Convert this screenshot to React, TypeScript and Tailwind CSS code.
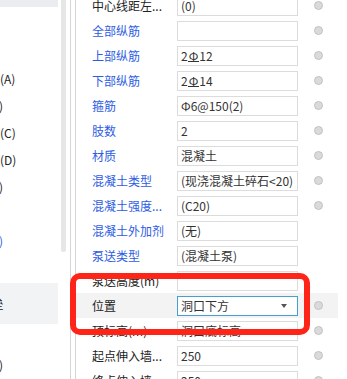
type Row = {
  label: string
  blue?: boolean
  value?: React.ReactNode
  radio?: boolean
  select?: boolean
}

// HRB400 rebar mark: Φ with a base stroke
const Hrb = () => <span className="inline-block border-b border-[#333] leading-[11px] px-[1px]">Φ</span>

const rows: Row[] = [
  { label: '中心线距左...', value: '(0)', radio: true },
  { label: '全部纵筋', blue: true, value: '', radio: true },
  { label: '上部纵筋', blue: true, value: <>2<Hrb />12</>, radio: true },
  { label: '下部纵筋', blue: true, value: <>2<Hrb />14</>, radio: true },
  { label: '箍筋', blue: true, value: 'Φ6@150(2)', radio: true },
  { label: '肢数', blue: true, value: '2', radio: true },
  { label: '材质', blue: true, value: '混凝土', radio: true },
  { label: '混凝土类型', blue: true, value: '(现浇混凝土碎石<20)', radio: true },
  { label: '混凝土强度...', blue: true, value: '(C20)', radio: true },
  { label: '混凝土外加剂', blue: true, value: '(无)' },
  { label: '泵送类型', blue: true, value: '(混凝土泵)' },
  { label: '泵送高度(m)', value: '' },
  { label: '位置', value: '洞口下方', radio: true, select: true },
  { label: '顶标高(m)', value: '洞口底标高', radio: true },
  { label: '起点伸入墙...', value: '250', radio: true },
  { label: '终点伸入墙...', value: '250', radio: true },
]

const TreeText = ({ children, blue }: { children: React.ReactNode; blue?: boolean }) => (
  <div className={`flex h-[27.5px] items-center whitespace-nowrap ${blue ? 'text-[#2f62e0]' : 'text-[#222]'}`}>
    {children}
  </div>
)

export default function App() {
  return (
    <div className="relative flex h-[379px] w-[347px] overflow-hidden bg-white font-['Noto_Sans_CJK_SC',sans-serif] text-[12px] text-[#333]">
      {/* Left tree panel, clipped */}
      <div className="flex w-[58px] shrink-0 flex-col overflow-hidden">
        <div className="h-[7px] bg-[#ebecf0]" />
        <div className="h-[59.25px]" />
        <TreeText>(A)</TreeText>
        <TreeText><span className="-ml-[1px]">)</span></TreeText>
        <TreeText>(C)</TreeText>
        <TreeText>(D)</TreeText>
        <TreeText><span className="-ml-[1px]">)</span></TreeText>
        <TreeText>{''}</TreeText>
        <TreeText blue><span className="-ml-[1px]">)</span></TreeText>
        <div className="h-[29px]" />
        <div className="flex h-[42px] items-center bg-[#f2f3f5] whitespace-nowrap text-[#222]">
          <span className="-ml-[8.5px]">垒</span>
        </div>
        <div className="h-[28px]" />
        <TreeText><span className="-ml-[1px]">)</span></TreeText>
      </div>

      {/* Scrollbar and dividers */}
      <div className="w-[3px] shrink-0" />
      <div className="h-[252px] w-[5px] shrink-0 rounded-b-full bg-[#e6e6e6]" />
      <div className="w-[4px] shrink-0" />
      <div className="w-px shrink-0 bg-[#d6d6d6]" />
      <div className="w-[4px] shrink-0" />
      <div className="w-px shrink-0 bg-[#d6d6d6]" />

      {/* Property grid */}
      <div className="-mt-[7px] flex w-[262px] shrink-0 flex-col">
        {rows.map((r) => (
          <div
            key={r.label}
            className={`flex h-[25px] shrink-0 items-center ${r.select ? 'bg-[#f3f3f3]' : ''}`}
          >
            <div
              className={`w-[101px] shrink-0 whitespace-nowrap pl-[16px] ${r.blue ? 'text-[#2d5ce3]' : 'text-[#222]'}`}
            >
              {r.label}
            </div>
            <div
              className={`flex h-[20px] w-[121px] shrink-0 items-center justify-between whitespace-nowrap border bg-white pl-[3px] pr-[10px] ${
                r.select ? 'border-[#45a0d2]' : 'border-[#dcdcdc]'
              }`}
            >
              <span>{r.value}</span>
              {r.select && (
                <svg width="6" height="4" viewBox="0 0 6 4">
                  <path d="M0 0h6L3 4z" fill="#555" />
                </svg>
              )}
            </div>
            <div className="flex w-[40px] justify-center">
              {r.radio && <div className="h-[9px] w-[9px] rounded-full border border-[#c2c2c2] bg-[#dadada]" />}
            </div>
          </div>
        ))}
      </div>

      {/* Red annotation box */}
      <div className="pointer-events-none absolute left-[70px] top-[273px] h-[62px] w-[240px] rounded-[10px] border-[6px] border-[#fe2418]" />
    </div>
  )
}
